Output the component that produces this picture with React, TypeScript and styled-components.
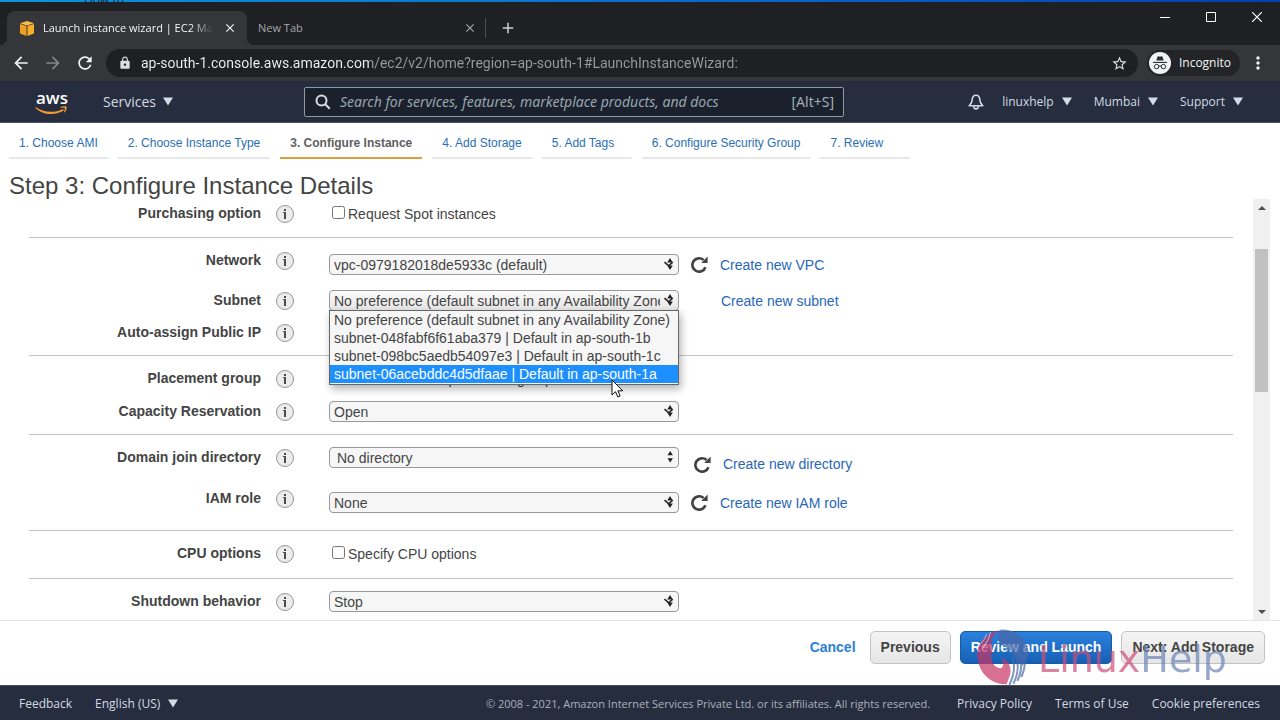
import React from "react";
import styled, { createGlobalStyle, css } from "styled-components";
import { MdArrowBack, MdArrowForward, MdRefresh, MdLock, MdStarBorder, MdMoreVert, MdClose, MdAdd } from "react-icons/md";

const GlobalStyle = createGlobalStyle`
  *, *::before, *::after { box-sizing: border-box; }
  body { margin: 0; font-family: "Liberation Sans", Arial, sans-serif; background: #fff; color: #444; }
  button, input, select { font: inherit; color: inherit; margin: 0; }
  a { text-decoration: none; color: inherit; }
  ul { margin: 0; padding: 0; list-style: none; }
`;

const uiFont = `"Open Sans", "Noto Sans", sans-serif`;
const navFont = `"Noto Sans", "Open Sans", sans-serif`;

const Page = styled.div`
  display: flex;
  flex-direction: column;
  height: 100vh;
  overflow: hidden;
`;

const IconButton = styled.button`
  display: inline-flex;
  align-items: center;
  justify-content: center;
  padding: 0;
  border: 0;
  background: none;
  flex: none;
`;

/* Browser window */

const Desktop = styled.div`
  height: 2px;
  flex: none;
  overflow: hidden;
  padding-left: 84px;
  background: linear-gradient(90deg, #0a93dc, #0a6fd0 50%, #0440ae);
  color: #10243a;
  font: 12px/4px ${uiFont};
  display: flex;
  align-items: flex-end;
`;

const TabStrip = styled.div`
  display: flex;
  align-items: flex-end;
  height: 43px;
  flex: none;
  padding-left: 7px;
  background: #1f2023;
  font: 11px/16px ${uiFont};
`;

const BrowserTab = styled.div<{ $active?: boolean }>`
  position: relative;
  display: flex;
  align-items: center;
  gap: 9px;
  width: 240px;
  height: 34px;
  border-radius: 8px 8px 0 0;
  padding: 0 10px 0 ${(p) => (p.$active ? 13 : 11)}px;
  color: ${(p) => (p.$active ? "#f4f4f5" : "#a4a7ac")};
  ${(p) =>
    p.$active &&
    css`
      background: #35363a;
      &::before,
      &::after {
        content: "";
        position: absolute;
        bottom: 0;
        width: 7px;
        height: 7px;
      }
      &::before {
        left: -7px;
        background: radial-gradient(circle at 0 0, transparent 7px, #35363a 7px);
      }
      &::after {
        right: -7px;
        background: radial-gradient(circle at 100% 0, transparent 7px, #35363a 7px);
      }
    `}
`;

const TabTitle = styled.span<{ $fade?: boolean }>`
  flex: 1;
  min-width: 0;
  overflow: hidden;
  white-space: nowrap;
  ${(p) => p.$fade && "mask-image: linear-gradient(90deg, #000 86%, transparent);"}
`;

const TabClose = styled(IconButton)`
  width: 14px;
  height: 14px;
`;

const TabDivider = styled.span`
  width: 1px;
  height: 20px;
  margin: 0 13px 7px -2px;
  background: #4d4f53;
`;

const NewTabButton = styled(IconButton)`
  height: 34px;
  color: #d0d2d6;
`;

const WindowButtons = styled.div`
  display: flex;
  align-self: flex-start;
  margin-left: auto;
  color: #fff;
`;

const WindowButton = styled(IconButton)`
  width: 46px;
  height: 30px;
`;

const Toolbar = styled.div`
  display: flex;
  align-items: center;
  height: 36px;
  flex: none;
  padding: 0 12px 0 10px;
  background: #35363a;
  color: #f1f1f2;
`;

const HistoryButton = styled(IconButton)<{ $dim?: boolean }>`
  width: 22px;
  height: 28px;
  margin-right: 10px;
  color: ${(p) => (p.$dim ? "#85878b" : "#f4f4f5")};
`;

const Omnibox = styled.div`
  display: flex;
  align-items: center;
  flex: 1;
  gap: 9px;
  height: 28px;
  margin-right: 9px;
  padding: 0 10px 0 12px;
  border-radius: 14px;
  background: #1f2023;
  color: #dcdde0;
`;

const Address = styled.input`
  flex: 1;
  min-width: 0;
  padding: 0;
  border: 0;
  outline: 0;
  font: 14px/20px Roboto, ${uiFont};
  color: transparent;
  background: linear-gradient(90deg, #f4f4f5 228px, #989a9e 228px);
  background-clip: text;
  -webkit-background-clip: text;
`;

const Incognito = styled.button`
  display: flex;
  align-items: center;
  gap: 8px;
  height: 26px;
  padding: 0 9px 0 2px;
  border: 0;
  border-radius: 13px;
  background: #232427;
  color: #f4f4f5;
  font: 12px/16px ${uiFont};
`;

const MenuButton = styled(IconButton)`
  margin-left: 8px;
  width: 20px;
`;

/* Console navigation */

const ConsoleNav = styled.header`
  display: flex;
  align-items: center;
  height: 42px;
  flex: none;
  padding: 0 37px 0 35px;
  background: #252d3f;
  border-bottom: 1px solid #47535a;
  color: #d3dae2;
  font: 12px/18px ${uiFont};
`;

const HomeLink = styled.a`
  display: flex;
  padding-top: 3px;
`;

const NavMenu = styled.button`
  display: flex;
  align-items: center;
  gap: 8px;
  padding: 0;
  border: 0;
  background: none;
  white-space: nowrap;
`;

const ServicesMenu = styled(NavMenu)`
  margin-left: 34px;
  width: 201px;
  gap: 7px;
  font: 14px/18px ${uiFont};
`;

const Search = styled.label`
  display: flex;
  align-items: center;
  gap: 9px;
  flex: 0 1 540px;
  height: 30px;
  padding: 0 9px 0 10px;
  border: 1px solid #8d9ba6;
  border-radius: 2px;
  background: #1a212d;
  font: 14px/18px ${navFont};
`;

const SearchInput = styled.input`
  flex: 1;
  min-width: 0;
  padding: 0;
  border: 0;
  outline: 0;
  background: none;
  &::placeholder {
    color: #98a5ad;
    font-style: italic;
    opacity: 1;
  }
`;

const Shortcut = styled.span`
  color: #a3adb5;
`;

const Account = styled.div`
  display: flex;
  align-items: center;
  gap: 22px;
  margin-left: auto;
`;

const BellButton = styled(IconButton)`
  margin-right: -4px;
`;

/* Wizard */

const Steps = styled.nav`
  display: flex;
  gap: 10px;
  flex: none;
  padding: 10px 9px 0;
  font-size: 12px;
  line-height: 20px;
`;

const Step = styled.a<{ $current?: boolean }>`
  min-width: 90px;
  padding: 0 10px 4px;
  white-space: nowrap;
  border-bottom: 2px solid ${(p) => (p.$current ? "#df9c3f" : "#e8e8e8")};
  color: ${(p) => (p.$current ? "#5f5f5f" : "#2a6fb5")};
  font-weight: ${(p) => (p.$current ? 700 : 400)};
`;

const Title = styled.h1`
  flex: none;
  margin: 14px 9px 0;
  font-size: 24px;
  line-height: 26px;
  font-weight: 400;
  color: #444;
`;

const Body = styled.main`
  display: flex;
  flex: 1;
  min-height: 0;
  padding-right: 10px;
  border-bottom: 1px solid #e4e4e4;
`;

const Form = styled.form`
  flex: 1;
  min-width: 0;
  overflow: hidden;
  padding: 0 20px 0 29px;
  font-size: 14px;
  line-height: 18px;
`;

const Section = styled.section<{ $first?: boolean }>`
  padding: ${(p) => (p.$first ? 4 : 12)}px 0 12px;
  border-bottom: 1px solid #c4c4c4;
`;

const Row = styled.div<{ $height: number }>`
  display: grid;
  grid-template-columns: 232px 18px 1fr;
  column-gap: 15px;
  min-height: ${(p) => p.$height}px;
  align-items: start;
`;

const Label = styled.label`
  padding-top: 1px;
  text-align: right;
  font-weight: 700;
`;

const Info = styled.button`
  width: 18px;
  height: 18px;
  margin-top: 2px;
  padding: 0;
  border: 1px solid #969696;
  border-radius: 50%;
  background: #ececec;
  display: flex;
  align-items: center;
  justify-content: center;
`;

const Controls = styled.div<{ $lowered?: boolean }>`
  display: flex;
  align-items: flex-start;
  padding: ${(p) => (p.$lowered ? 4 : 0)}px 0 0 20px;
`;

const SelectBox = styled.div`
  position: relative;
  width: 350px;
`;

const Select = styled.select<{ $open?: boolean; $inset?: boolean }>`
  appearance: none;
  display: block;
  width: 100%;
  height: 21px;
  padding: 0 18px 0 ${(p) => (p.$inset ? 7 : 4)}px;
  border: 1px solid #999;
  border-radius: 4px;
  outline: 0;
  background: ${(p) => (p.$open ? "linear-gradient(#fafafa, #e6e6e6)" : "#f6f6f6")};
  line-height: 18px;
`;

const SelectArrows = styled.svg`
  position: absolute;
  top: 3px;
  right: 2px;
  pointer-events: none;
`;

const Options = styled.ul`
  position: absolute;
  z-index: 2;
  top: 20px;
  left: 0;
  right: 0;
  padding-bottom: 1px;
  border: 1px solid #666;
  background: #f6f6f6;
  box-shadow: 2px 4px 8px rgba(0, 0, 0, 0.3);
  line-height: 18px;
`;

const OptionItem = styled.li<{ $selected?: boolean }>`
  padding-left: 4px;
  white-space: nowrap;
  background: ${(p) => (p.$selected ? "#1e8fff" : "transparent")};
  color: ${(p) => (p.$selected ? "#fff" : "#444")};
`;

const Cursor = styled.svg`
  position: absolute;
  z-index: 3;
  top: 89px;
  left: 282px;
`;

const Aside = styled.div<{ $low?: boolean }>`
  display: flex;
  align-items: center;
  gap: 12px;
  min-height: 21px;
  margin-left: ${(p) => (p.$low ? 15 : 12)}px;
  padding-top: ${(p) => (p.$low ? 8 : 0)}px;
`;

const RefreshButton = styled(IconButton)`
  width: 17px;
  height: 17px;
`;

const CreateLink = styled.a<{ $alone?: boolean }>`
  margin-left: ${(p) => (p.$alone ? 30 : 0)}px;
  color: #2a66b8;
`;

const CheckLabel = styled.label`
  display: flex;
  align-items: flex-start;
  gap: 3px;
  line-height: 20px;
  padding-top: 1px;
`;

const Checkbox = styled.input`
  width: 13px;
  height: 13px;
  margin: 2px 0 0 3px;
`;

const ScrollTrack = styled.div`
  display: flex;
  flex-direction: column;
  align-items: center;
  width: 17px;
  background: #f0f0f0;
`;

const ScrollButton = styled(IconButton)`
  width: 17px;
  height: 17px;
`;

const ScrollThumb = styled.div`
  width: 13px;
  height: 34%;
  margin: 33px 0 auto;
  background: #c1c1c1;
`;

const Actions = styled.div`
  position: relative;
  display: flex;
  justify-content: flex-end;
  gap: 9px;
  flex: none;
  height: 64px;
  padding: 10px 15px 0;
  font-size: 14px;
  font-weight: 700;
`;

const ActionButton = styled.button<{ $kind: "plain" | "default" | "primary" }>`
  height: 33px;
  padding: 0 10px 2px;
  border-radius: 5px;
  border: 1px solid ${(p) => ({ plain: "transparent", default: "#c3c3c3", primary: "#1a5ba5" })[p.$kind]};
  background: ${(p) =>
    ({
      plain: "none",
      default: "linear-gradient(#f4f4f4, #e6e6e6)",
      primary: "linear-gradient(#2a81dd, #1660b4)",
    })[p.$kind]};
  color: ${(p) => ({ plain: "#2b80d8", default: "#444", primary: "#fff" })[p.$kind]};
  margin-right: ${(p) => (p.$kind === "plain" ? -6 : 0)}px;
`;

const Watermark = styled.div`
  position: absolute;
  right: 53px;
  top: 6px;
  display: flex;
  align-items: flex-start;
  pointer-events: none;
  font: 38px/40px "DejaVu Sans", sans-serif;
  opacity: 0.7;
  svg {
    margin-right: 6px;
  }
`;

const WatermarkText = styled.span<{ $tone: string }>`
  padding-top: 12px;
  color: ${(p) => p.$tone};
`;

const Footer = styled.footer`
  display: flex;
  align-items: center;
  justify-content: space-between;
  height: 35px;
  flex: none;
  padding: 1px 20px 0 19px;
  border-top: 1px solid #47535a;
  background: #252d3f;
  color: #d3dae2;
  font: 12px/16px ${uiFont};
  white-space: nowrap;
`;

const FooterGroup = styled.div`
  display: flex;
  align-items: center;
  gap: 23px;
`;

const Copyright = styled.small`
  margin: 0 27px 0 auto;
  font-size: 11px;
  color: #aab2bb;
`;

const Caret = () => (
  <svg width="10" height="9" viewBox="0 0 10 9" aria-hidden="true">
    <path d="M0 0.5h10L5 8.5z" fill="#d3dde6" />
  </svg>
);

const AwsLogo = () => (
  <svg width="34" height="24" viewBox="0 0 34 24" role="img" aria-label="AWS">
    <text x="1" y="13" fontFamily="Open Sans, sans-serif" fontSize="17" fontWeight="600" fill="#fff">
      aws
    </text>
    <path d="M0.5 16c7.500 5.500 18.500 6.500 27.500 2l.8 1.500c-9.500 5.500-21.500 4.500-28.600-2.800z" fill="#f29a2e" />
    <path d="M25.500 16.300c2.200-1 5-1.200 6-.6.7 1.400-.4 4.300-2 5.900l-.7-.4c.8-1.500 1.300-3.300 1-4.100-.8-.4-2.600-.2-4.200 0z" fill="#f29a2e" />
  </svg>
);

const CubeIcon = () => (
  <svg width="14" height="15" viewBox="0 0 14 15" aria-hidden="true">
    <path d="M7 0l7 2.200-7 2.300L0 2.200z" fill="#f9bd45" />
    <path d="M0 3l6.500 2.100V15L0 12.600z" fill="#f0a020" />
    <path d="M14 3L7.500 5.100V15l6.500-2.400z" fill="#f6b02c" />
  </svg>
);

const IncognitoIcon = () => (
  <svg width="22" height="22" viewBox="0 0 22 22" aria-hidden="true">
    <circle cx="11" cy="11" r="11" fill="#f1f2f3" />
    <path d="M7.300 8.600l1.200-3.900q.2-.6.9-.4l1.600.4 1.600-.4q.7-.2.9.4l1.200 3.900z" fill="#2b2c2f" />
    <path d="M4 9.900h14v1.100H4z" fill="#2b2c2f" />
    <g fill="none" stroke="#2b2c2f" strokeWidth="1">
      <circle cx="7.600" cy="14.600" r="2.200" />
      <circle cx="14.400" cy="14.600" r="2.200" />
      <path d="M9.800 14.300q1.200-.7 2.400 0" />
    </g>
  </svg>
);

const BellIcon = () => (
  <svg width="16" height="16" viewBox="0 0 16 16" fill="none" stroke="#d3dae2" strokeWidth="1.600" strokeLinejoin="round">
    <path d="M8 1.200C5 1.200 4.200 3.800 4.100 6.200 4 8.800 2.600 10 1.200 11.800h13.600C13.400 10 12 8.800 11.900 6.200 11.800 3.800 11 1.200 8 1.200z" />
    <path d="M5.800 12.200c0 3.600 4.400 3.600 4.400 0" />
  </svg>
);

const ReloadGlyph = () => (
  <svg width="17" height="17" viewBox="0 0 17 17" aria-hidden="true">
    <path d="M12.600 4A6.700 6.700 0 1 0 14.400 11.200" fill="none" stroke="#444" strokeWidth="2.700" />
    <path d="M16.600 0.600v6.400H10.200z" fill="#444" />
  </svg>
);

const InfoGlyph = () => (
  <svg width="4" height="10" viewBox="0 0 4 10" aria-hidden="true">
    <path d="M1 0h2v2H1zM0 3h3v7H1V4H0z" fill="#4c4c4c" />
  </svg>
);

const Arrows = ({ clean }: { clean?: boolean }) => (
  <SelectArrows width="14" height="14" viewBox="0 0 14 14" aria-hidden="true">
    <path d={clean ? "M4.500 5.200L7.200 1l2.700 4.200zM4.500 8.200h5.400L7.200 12.400z" : "M4.200 5.500L7 1l2.800 4.500zM4.200 8.600h5.600L7 13z"} fill="#222" />
    {!clean && <path d="M1.500 5.200l4.200 3.600 4-3.600" fill="none" stroke="#222" strokeWidth="1.600" />}
  </SelectArrows>
);

const Emblem = () => (
  <svg width="60" height="60" viewBox="0 0 180 180" aria-hidden="true">
    <path d="M16 76C18 50 40 18 80 10 58 26 54 48 62 68 50 100 66 122 86 124 98 120 94 100 88 92 112 100 122 126 112 150L104 172C50 172 14 130 16 76z" fill="#c83464" />
    <path d="M84 8C126 4 166 34 170 76 166 96 158 110 150 118 128 80 108 62 88 54 74 40 72 22 84 8z" fill="#4b69a8" />
    <g fill="none" stroke="#4b69a8" strokeWidth="6">
      <path d="M122 90Q134 130 112 174" />
      <path d="M134 96Q144 132 124 170" />
      <path d="M146 100Q152 130 136 162" />
      <path d="M158 100Q160 124 148 150" />
    </g>
    <g fill="none" stroke="#fff" strokeWidth="2.500">
      <path d="M24 52Q40 36 44 22M34 62Q50 40 56 16" />
    </g>
  </svg>
);

const steps = [
  "1. Choose AMI",
  "2. Choose Instance Type",
  "3. Configure Instance",
  "4. Add Storage",
  "5. Add Tags",
  "6. Configure Security Group",
  "7. Review",
];

const subnets = [
  "No preference (default subnet in any Availability Zone)",
  "subnet-048fabf6f61aba379 | Default in ap-south-1b",
  "subnet-098bc5aedb54097e3 | Default in ap-south-1c",
  "subnet-06acebddc4d5dfaae | Default in ap-south-1a",
];

type FieldProps = {
  id: string;
  label: string;
  height: number;
  lowered?: boolean;
  children?: React.ReactNode;
};

const Field = ({ id, label, height, lowered, children }: FieldProps) => (
  <Row $height={height}>
    <Label htmlFor={id}>{label}</Label>
    <Info type="button" aria-label={`About ${label}`}>
      <InfoGlyph />
    </Info>
    <Controls $lowered={lowered}>{children}</Controls>
  </Row>
);

type PickerProps = { id: string; options: string[]; open?: boolean; inset?: boolean };

const Picker = ({ id, options, open, inset }: PickerProps) => (
  <SelectBox>
    <Select id={id} $open={open} $inset={inset} defaultValue={options[0]}>
      {options.map((o) => (
        <option key={o}>{o}</option>
      ))}
    </Select>
    <Arrows clean={inset} />
    {open && (
      <>
        <Options role="listbox" aria-label="Subnet">
          {options.map((o, i) => (
            <OptionItem key={o} role="option" aria-selected={i === 3} $selected={i === 3}>
              {o}
            </OptionItem>
          ))}
        </Options>
        <Cursor width="13" height="20" viewBox="0 0 13 20" aria-hidden="true">
          <path d="M1 1v15l3.500-3.300L6.800 18l2.400-1-2.300-5.200h4.800z" fill="#fff" stroke="#111" strokeWidth="1" />
        </Cursor>
      </>
    )}
  </SelectBox>
);

const Refresh = () => (
  <RefreshButton type="button" aria-label="Refresh">
    <ReloadGlyph />
  </RefreshButton>
);

const Browser = () => (
  <>
    <Desktop aria-hidden="true">How to</Desktop>
    <TabStrip>
      <BrowserTab $active>
        <CubeIcon />
        <TabTitle $fade>Launch instance wizard | EC2 Management</TabTitle>
        <TabClose aria-label="Close tab">
          <MdClose size={14} />
        </TabClose>
      </BrowserTab>
      <BrowserTab>
        <TabTitle>New Tab</TabTitle>
        <TabClose aria-label="Close tab">
          <MdClose size={14} />
        </TabClose>
      </BrowserTab>
      <TabDivider />
      <NewTabButton aria-label="New tab">
        <MdAdd size={18} />
      </NewTabButton>
      <WindowButtons>
        <WindowButton aria-label="Minimize">
          <svg width="10" height="10" stroke="#fff">
            <path d="M0 5.500h10" />
          </svg>
        </WindowButton>
        <WindowButton aria-label="Maximize">
          <svg width="10" height="10" stroke="#fff" fill="none">
            <path d="M.5.5h9v9h-9z" />
          </svg>
        </WindowButton>
        <WindowButton aria-label="Close">
          <svg width="10" height="10" stroke="#fff" strokeWidth="1.200">
            <path d="M0 0l10 10M10 0L0 10" />
          </svg>
        </WindowButton>
      </WindowButtons>
    </TabStrip>
    <Toolbar>
      <HistoryButton aria-label="Back">
        <MdArrowBack size={20} />
      </HistoryButton>
      <HistoryButton aria-label="Forward" $dim>
        <MdArrowForward size={20} />
      </HistoryButton>
      <HistoryButton aria-label="Reload">
        <MdRefresh size={20} />
      </HistoryButton>
      <Omnibox>
        <MdLock size={14} />
        <Address
          aria-label="Address"
          spellCheck={false}
          defaultValue="ap-south-1.console.aws.amazon.com/ec2/v2/home?region=ap-south-1#LaunchInstanceWizard:"
        />
        <MdStarBorder size={17} />
      </Omnibox>
      <Incognito>
        <IncognitoIcon />
        Incognito
      </Incognito>
      <MenuButton aria-label="Menu">
        <MdMoreVert size={20} />
      </MenuButton>
    </Toolbar>
  </>
);

export default function App() {
  return (
    <Page>
      <GlobalStyle />
      <Browser />
      <ConsoleNav>
        <HomeLink href="#home" aria-label="AWS home">
          <AwsLogo />
        </HomeLink>
        <ServicesMenu>
          Services <Caret />
        </ServicesMenu>
        <Search>
          <svg width="16" height="16" viewBox="0 0 16 16" fill="none" stroke="#d5dbe2" strokeWidth="2" aria-hidden="true">
            <circle cx="6.500" cy="6.500" r="5" />
            <path d="M10.200 10.200l4.600 4.600" />
          </svg>
          <SearchInput
            aria-label="Search"
            placeholder="Search for services, features, marketplace products, and docs"
          />
          <Shortcut>[Alt+S]</Shortcut>
        </Search>
        <Account>
          <BellButton aria-label="Notifications">
            <BellIcon />
          </BellButton>
          <NavMenu>
            linuxhelp <Caret />
          </NavMenu>
          <NavMenu>
            Mumbai <Caret />
          </NavMenu>
          <NavMenu>
            Support <Caret />
          </NavMenu>
        </Account>
      </ConsoleNav>

      <Steps>
        {steps.map((s, i) => (
          <Step key={s} href={`#step-${i + 1}`} $current={i === 2}>
            {s}
          </Step>
        ))}
      </Steps>
      <Title>Step 3: Configure Instance Details</Title>

      <Body>
        <Form>
          <Section $first>
            <Field id="spot" label="Purchasing option" height={22}>
              <CheckLabel>
                <Checkbox id="spot" type="checkbox" />
                Request Spot instances
              </CheckLabel>
            </Field>
          </Section>
          <Section>
            <Field id="network" label="Network" height={40} lowered>
              <Picker id="network" options={["vpc-0979182018de5933c (default)"]} />
              <Aside>
                <Refresh />
                <CreateLink href="#vpc">Create new VPC</CreateLink>
              </Aside>
            </Field>
            <Field id="subnet" label="Subnet" height={32}>
              <Picker id="subnet" options={subnets} open />
              <Aside>
                <CreateLink href="#subnet" $alone>
                  Create new subnet
                </CreateLink>
              </Aside>
            </Field>
            <Field id="public-ip" label="Auto-assign Public IP" height={21}>
              <Picker id="public-ip" options={["Use subnet setting (Enable)"]} />
            </Field>
          </Section>
          <Section>
            <Field id="placement" label="Placement group" height={33}>
              <CheckLabel>
                <Checkbox id="placement" type="checkbox" />
                Add instance to placement group
              </CheckLabel>
            </Field>
            <Field id="capacity" label="Capacity Reservation" height={21}>
              <Picker id="capacity" options={["Open"]} />
            </Field>
          </Section>
          <Section>
            <Field id="directory" label="Domain join directory" height={41}>
              <Picker id="directory" options={["No directory"]} inset />
              <Aside $low>
                <Refresh />
                <CreateLink href="#directory">Create new directory</CreateLink>
              </Aside>
            </Field>
            <Field id="iam" label="IAM role" height={30} lowered>
              <Picker id="iam" options={["None"]} />
              <Aside>
                <Refresh />
                <CreateLink href="#iam">Create new IAM role</CreateLink>
              </Aside>
            </Field>
          </Section>
          <Section>
            <Field id="cpu" label="CPU options" height={23}>
              <CheckLabel>
                <Checkbox id="cpu" type="checkbox" />
                Specify CPU options
              </CheckLabel>
            </Field>
          </Section>
          <Section>
            <Field id="shutdown" label="Shutdown behavior" height={33}>
              <Picker id="shutdown" options={["Stop"]} />
            </Field>
          </Section>
        </Form>
        <ScrollTrack>
          <ScrollButton aria-label="Scroll up">
            <svg width="8" height="4">
              <path d="M0 4L4 0l4 4z" fill="#505050" />
            </svg>
          </ScrollButton>
          <ScrollThumb />
          <ScrollButton aria-label="Scroll down">
            <svg width="8" height="4">
              <path d="M0 0l4 4 4-4z" fill="#505050" />
            </svg>
          </ScrollButton>
        </ScrollTrack>
      </Body>

      <Actions>
        <ActionButton $kind="plain">Cancel</ActionButton>
        <ActionButton $kind="default">Previous</ActionButton>
        <ActionButton $kind="primary">Review and Launch</ActionButton>
        <ActionButton $kind="default">Next: Add Storage</ActionButton>
        <Watermark aria-hidden="true">
          <Emblem />
          <WatermarkText $tone="#cc4f79">Linux</WatermarkText>
          <WatermarkText $tone="#6d84b8">Help</WatermarkText>
        </Watermark>
      </Actions>

      <Footer>
        <FooterGroup>
          <a href="#feedback">Feedback</a>
          <NavMenu>
            English (US) <Caret />
          </NavMenu>
        </FooterGroup>
        <Copyright>
          © 2008 - 2021, Amazon Internet Services Private Ltd. or its affiliates. All rights reserved.
        </Copyright>
        <FooterGroup>
          <a href="#privacy">Privacy Policy</a>
          <a href="#terms">Terms of Use</a>
          <a href="#cookies">Cookie preferences</a>
        </FooterGroup>
      </Footer>
    </Page>
  );
}
